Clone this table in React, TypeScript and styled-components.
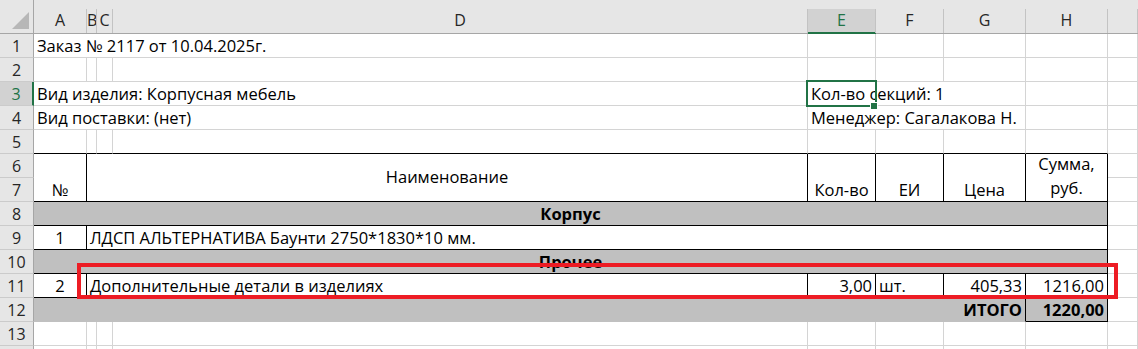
import React from "react";
import styled, { createGlobalStyle } from "styled-components";

const GlobalStyle = createGlobalStyle`
  html, body { margin: 0; padding: 0; background: #fff; }
  body { font-family: "Open Sans", "Noto Sans", sans-serif; }
  #root { width: 1138px; height: 349px; overflow: hidden; }
`;

const GREEN = "#217346";
const GRID = "#d4d4d4";
const FILL = "#c0c0c0";
const HEAD_BG = "#e6e6e6";
const HEAD_SEL = "#d2d2d2";

const Sheet = styled.div`
  position: relative;
  display: grid;
  grid-template-columns: 34px 53px 10px 16px 695px 68px 68px 82px 82px 1fr;
  grid-template-rows: 34px repeat(14, 24px);
  width: 1138px;
  height: 349px;
  overflow: hidden;
  background: #fff;
`;

const Corner = styled.div`
  background: ${HEAD_BG};
  border-right: 1px solid #a6a6a6;
  border-bottom: 1px solid #a6a6a6;
  box-sizing: border-box;
  display: flex;
  align-items: flex-end;
  justify-content: flex-end;
  svg { display: block; }
`;

const ColHead = styled.div<{ $selected?: boolean }>`
  background: ${HEAD_BG};
  box-sizing: border-box;
  border-bottom: 1px solid ${(p) => (p.$selected ? GREEN : "#a6a6a6")};
  display: flex;
  flex-direction: column;
  justify-content: flex-end;
`;

const ColLabel = styled.div<{ $selected?: boolean }>`
  height: 24px;
  box-sizing: border-box;
  border-right: 1px solid #c3c3c3;
  background: ${(p) => (p.$selected ? HEAD_SEL : HEAD_BG)};
  box-shadow: ${(p) => (p.$selected ? `inset 0 -1px 0 ${GREEN}` : "none")};
  color: ${(p) => (p.$selected ? GREEN : "#262626")};
  font-family: "Open Sans", "Noto Sans", sans-serif;
  font-size: 16px;
  line-height: 22px;
  text-align: center;
  overflow: hidden;
  white-space: nowrap;
`;

const RowHead = styled.div<{ $selected?: boolean }>`
  background: ${(p) => (p.$selected ? HEAD_SEL : HEAD_BG)};
  box-sizing: border-box;
  border-right: ${(p) => (p.$selected ? `2px solid ${GREEN}` : "1px solid #a6a6a6")};
  border-bottom: 1px solid #cbcbcb;
  color: ${(p) => (p.$selected ? GREEN : "#262626")};
  font-family: "Open Sans", "Noto Sans", sans-serif;
  font-size: 16px;
  line-height: 20px;
  display: flex;
  align-items: flex-end;
  justify-content: center;
  padding-bottom: 1px;
  overflow: hidden;
`;

type Line = "grid" | "black" | "none";

interface CellProps {
  $span?: number;
  $rows?: number;
  $align?: "left" | "center" | "right";
  $v?: "bottom" | "center";
  $bold?: boolean;
  $fill?: boolean;
  $r?: Line;
  $b?: Line;
  $lh?: number;
}

const lineColor = (l: Line | undefined, fill?: boolean) =>
  l === "black" ? "#000" : l === "none" ? (fill ? FILL : "#fff") : GRID;

const Cell = styled.div<CellProps>`
  position: relative;
  grid-column: span ${(p) => p.$span ?? 1};
  grid-row: span ${(p) => p.$rows ?? 1};
  box-sizing: border-box;
  display: flex;
  align-items: ${(p) => (p.$v === "center" ? "center" : "flex-end")};
  justify-content: ${(p) =>
    p.$align === "center" ? "center" : p.$align === "right" ? "flex-end" : "flex-start"};
  text-align: ${(p) => p.$align ?? "left"};
  padding: 0 3px 1px 3px;
  background: ${(p) => (p.$fill ? FILL : "#fff")};
  border-right: 1px solid ${(p) => lineColor(p.$r, p.$fill)};
  border-bottom: 1px solid ${(p) => lineColor(p.$b, p.$fill)};
  font-size: 16.5px;
  line-height: ${(p) => p.$lh ?? 20}px;
  font-weight: ${(p) => (p.$bold ? 700 : 400)};
  color: #000;
  white-space: nowrap;
`;

const Selection = styled.div`
  position: absolute;
  left: -2px;
  top: -2px;
  width: 71px;
  height: 27px;
  box-sizing: border-box;
  border: 2px solid ${GREEN};
  pointer-events: none;
  z-index: 2;
`;

const FillHandle = styled.div`
  position: absolute;
  left: 62px;
  top: 20px;
  width: 6px;
  height: 6px;
  background: ${GREEN};
  border: 1px solid #fff;
`;

const Annotation = styled.div`
  position: absolute;
  left: 77px;
  top: 263px;
  width: 1041px;
  height: 36px;
  box-sizing: border-box;
  border: 4px solid #ed1c24;
  pointer-events: none;
  z-index: 3;
`;

const letters = [
  { l: "A" },
  { l: "B" },
  { l: "C" },
  { l: "D" },
  { l: "E", sel: true },
  { l: "F" },
  { l: "G" },
  { l: "H" },
  { l: "" },
];

const Empty = ({ n }: { n: number }) => (
  <>
    {Array.from({ length: n }).map((_, i) => (
      <Cell key={i} />
    ))}
  </>
);

export default function App() {
  return (
    <>
      <GlobalStyle />
      <Sheet>
        <Corner>
          <svg width="33" height="33" viewBox="0 0 33 33">
            <polygon points="29,12 29,29 12,29" fill="#b7b7b7" />
          </svg>
        </Corner>
        {letters.map((c, i) => (
          <ColHead key={i} $selected={c.sel}>
            <ColLabel $selected={c.sel}>{c.l}</ColLabel>
          </ColHead>
        ))}

        {/* Row 1 */}
        <RowHead>1</RowHead>
        <Cell $span={4}>Заказ № 2117 от 10.04.2025г.</Cell>
        <Empty n={5} />

        {/* Row 2 */}
        <RowHead>2</RowHead>
        <Empty n={9} />

        {/* Row 3 */}
        <RowHead $selected>3</RowHead>
        <Cell $span={4}>Вид изделия: Корпусная мебель</Cell>
        <Cell $span={3}>
          Кол-во секций: 1
          <Selection>
            <FillHandle />
          </Selection>
        </Cell>
        <Empty n={2} />

        {/* Row 4 */}
        <RowHead>4</RowHead>
        <Cell $span={4}>Вид поставки: (нет)</Cell>
        <Cell $span={3}>Менеджер: Сагалакова Н.</Cell>
        <Empty n={2} />

        {/* Row 5 */}
        <RowHead>5</RowHead>
        {Array.from({ length: 8 }).map((_, i) => (
          <Cell key={i} $b="black" />
        ))}
        <Cell />

        {/* Rows 6-7 */}
        <RowHead>6</RowHead>
        <Cell $rows={2} $align="center" $r="black" $b="black">№</Cell>
        <Cell $rows={2} $span={3} $align="center" $v="center" $r="black" $b="black">
          Наименование
        </Cell>
        <Cell $rows={2} $align="center" $r="black" $b="black">Кол-во</Cell>
        <Cell $rows={2} $align="center" $r="black" $b="black">ЕИ</Cell>
        <Cell $rows={2} $align="center" $r="black" $b="black">Цена</Cell>
        <Cell $rows={2} $align="center" $r="black" $b="black" $lh={24}>
          Сумма,
          <br />
          руб.
        </Cell>
        <Cell />
        <RowHead>7</RowHead>
        <Cell />

        {/* Row 8 */}
        <RowHead>8</RowHead>
        <Cell $span={8} $fill $bold $align="center" $r="black" $b="black">Корпус</Cell>
        <Cell />

        {/* Row 9 */}
        <RowHead>9</RowHead>
        <Cell $align="center" $r="black" $b="black">1</Cell>
        <Cell $span={7} $r="black" $b="black">
          ЛДСП АЛЬТЕРНАТИВА Баунти 2750*1830*10 мм.
        </Cell>
        <Cell />

        {/* Row 10 */}
        <RowHead>10</RowHead>
        <Cell $span={8} $fill $bold $align="center" $r="black" $b="black">Прочее</Cell>
        <Cell />

        {/* Row 11 */}
        <RowHead>11</RowHead>
        <Cell $align="center" $r="black" $b="black">2</Cell>
        <Cell $span={3} $r="black" $b="black">Дополнительные детали в изделиях</Cell>
        <Cell $align="right" $r="black" $b="black">3,00</Cell>
        <Cell $r="black" $b="black">шт.</Cell>
        <Cell $align="right" $r="black" $b="black">405,33</Cell>
        <Cell $align="right" $r="black" $b="black">1216,00</Cell>
        <Cell />

        {/* Row 12 */}
        <RowHead>12</RowHead>
        <Cell $span={7} $fill $bold $align="right" $r="black" $b="none">ИТОГО</Cell>
        <Cell $fill $bold $align="right" $r="black" $b="black">1220,00</Cell>
        <Cell />

        {/* Row 13 */}
        <RowHead>13</RowHead>
        <Empty n={9} />

        {/* Row 14 (only its top edge is in view) */}
        <RowHead />
        <Empty n={9} />

        <Annotation />
      </Sheet>
    </>
  );
}
